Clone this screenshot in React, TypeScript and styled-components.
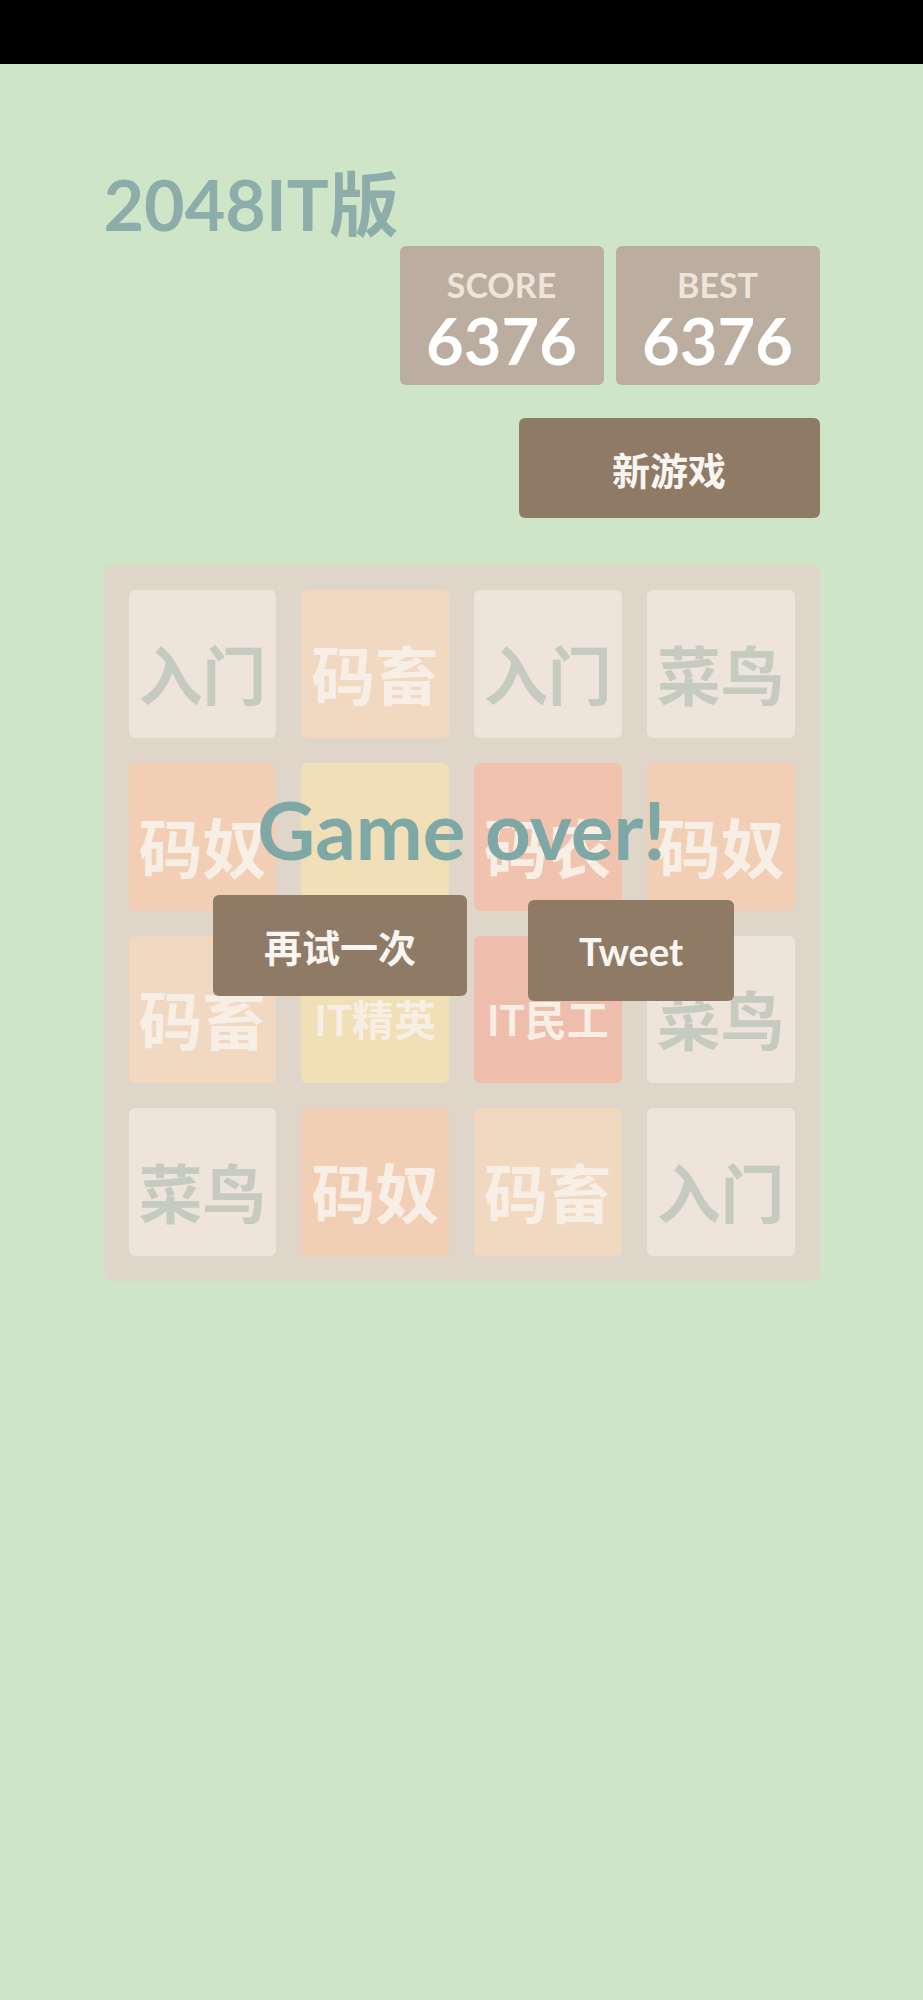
import React from 'react';
import styled, { createGlobalStyle } from 'styled-components';

interface Tile {
	label: string;
	bg: string;
	color: string;
	size?: number;
}

const light = '#c6cbbf';
const pale = '#f7eee5';

const T = {
	entry: { label: '入门', bg: '#efe4d9', color: light },
	rookie: { label: '菜鸟', bg: '#efe4d9', color: light },
	beast: { label: '码畜', bg: '#f1d9c1', color: pale },
	slave: { label: '码奴', bg: '#f2ceb4', color: pale },
	farmer: { label: '码农', bg: '#f1c3af', color: pale },
	worker: { label: 'IT民工', bg: '#efbdab', color: pale, size: 42 },
	blank128: { label: '', bg: '#f1dfb8', color: pale },
	elite: { label: 'IT精英', bg: '#f1dfb6', color: pale, size: 42 },
};

const grid: Tile[] = [
	T.entry, T.beast, T.entry, T.rookie,
	T.slave, T.blank128, T.farmer, T.slave,
	T.beast, T.elite, T.worker, T.rookie,
	T.rookie, T.slave, T.beast, T.entry,
];

const GlobalStyle = createGlobalStyle`
	body {
		margin: 0;
		background: #cee5c7;
		font-family: Lato, 'Noto Sans CJK SC', sans-serif;
	}
`;

const App: React.FC = () => (
	<>
		<GlobalStyle />
		<StatusBar />
		<Container>
			<Title>2048IT版</Title>
			<ScoreRow>
				<ScoreBox>
					<ScoreLabel>SCORE</ScoreLabel>
					<ScoreValue>6376</ScoreValue>
				</ScoreBox>
				<ScoreBox>
					<ScoreLabel>BEST</ScoreLabel>
					<ScoreValue>6376</ScoreValue>
				</ScoreBox>
			</ScoreRow>
			<ActionRow>
				<NewGameButton>新游戏</NewGameButton>
			</ActionRow>
			<Board>
				{grid.map((t, idx) => (
					<TileCell key={idx} $bg={t.bg} $color={t.color} $size={t.size ?? 64}>
						{t.label}
					</TileCell>
				))}
				<GameMessage>
					<MessageText>Game over!</MessageText>
					<MessageActions>
						<ActionButton>再试一次</ActionButton>
						<ActionButton>Tweet</ActionButton>
					</MessageActions>
				</GameMessage>
			</Board>
		</Container>
	</>
);

const StatusBar = styled.div`
	height: 64px;
	background: #000;
`;

const Container = styled.div`
	width: 716px;
	margin: 0 auto;
	padding-top: 105px;
`;

const Title = styled.h1`
	margin: 0;
	font-family: Lato, 'Noto Sans CJK SC', sans-serif;
	font-size: 70px;
	line-height: 70px;
	font-weight: 700;
	color: #8dadab;
`;

const ScoreRow = styled.div`
	display: flex;
	justify-content: flex-end;
	gap: 12px;
	margin-top: 7px;
`;

const ScoreBox = styled.div`
	width: 204px;
	height: 139px;
	box-sizing: border-box;
	padding-top: 22px;
	background: #bbada0;
	border-radius: 6px;
	text-align: center;
`;

const ScoreLabel = styled.div`
	font-size: 34px;
	line-height: 34px;
	font-weight: 700;
	color: #eee4da;
`;

const ScoreValue = styled.div`
	margin-top: 6px;
	font-size: 65px;
	line-height: 65px;
	font-weight: 700;
	color: #fff;
`;

const ActionRow = styled.div`
	display: flex;
	justify-content: flex-end;
	margin-top: 33px;
`;

const ButtonBase = styled.button`
	border: none;
	background: #8f7a66;
	border-radius: 6px;
	color: #f9f6f2;
	font-family: Lato, 'Noto Sans CJK SC', sans-serif;
	font-weight: 700;
	cursor: pointer;
	padding: 0;
`;

const NewGameButton = styled(ButtonBase)`
	width: 301px;
	height: 100px;
	font-size: 38px;
`;

const Board = styled.div`
	position: relative;
	margin-top: 47px;
	width: 716px;
	height: 716px;
	box-sizing: border-box;
	padding: 25px;
	background: #dfd5c9;
	border-radius: 8px;
	display: grid;
	grid-template-columns: repeat(4, 1fr);
	grid-template-rows: repeat(4, 1fr);
	gap: 25px;
`;

const TileCell = styled.div<{ $bg: string; $color: string; $size: number }>`
	background: ${(p) => p.$bg};
	color: ${(p) => p.$color};
	font-size: ${(p) => p.$size}px;
	font-weight: 700;
	border-radius: 6px;
	display: flex;
	align-items: center;
	justify-content: center;
	padding-top: 16px;
	box-sizing: border-box;
	white-space: nowrap;
`;

const GameMessage = styled.div`
	position: absolute;
	inset: 0;
	display: flex;
	flex-direction: column;
	align-items: center;
	padding-top: 224px;
	box-sizing: border-box;
`;

const MessageText = styled.p`
	margin: 0;
	font-family: Lato, sans-serif;
	font-size: 80px;
	line-height: 80px;
	font-weight: 700;
	color: #7ea8a6;
`;

const MessageActions = styled.div`
	display: flex;
	align-items: flex-start;
	gap: 61px;
	margin-top: 26px;
	padding-left: 24px;
`;

const ActionButton = styled(ButtonBase)`
	height: 101px;
	padding: 0 51px;
	font-size: 38px;
	&:last-child {
		margin-top: 5px;
	}
`;

export default App;
